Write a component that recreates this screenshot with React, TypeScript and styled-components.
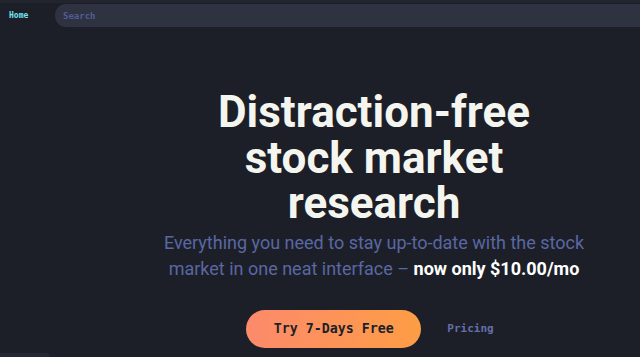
import React from "react";
import styled, { createGlobalStyle } from "styled-components";

const Global = createGlobalStyle`
  html, body { margin: 0; padding: 0; background: #1c1f27; }
  body { font-family: Roboto, "Noto Sans", sans-serif; overflow: hidden; }
  * { box-sizing: border-box; }
`;

const Page = styled.div`
  width: 640px;
  height: 357px;
  background: #1c1f27;
  display: flex;
  flex-direction: column;
  overflow: hidden;
`;

const Header = styled.header`
  display: flex;
  align-items: center;
  height: 31px;
  padding-top: 4px;
  padding-bottom: 4px;
  background: linear-gradient(#22252e 0, #22252e 3px, #1c1f27 3px);
`;

const NavLink = styled.a`
  width: 55px;
  padding-left: 9px;
  font-family: "DejaVu Sans Mono", monospace;
  font-weight: bold;
  font-size: 8px;
  color: #72e3f2;
  text-decoration: none;
`;

const Search = styled.div`
  flex: 1;
  height: 23px;
  display: flex;
  align-items: center;
  padding-left: 8px;
  background: #2f3241;
  border-radius: 11px 0 0 11px;
  font-family: "DejaVu Sans Mono", monospace;
  font-weight: bold;
  font-size: 9px;
  color: #4f5d95;
`;

const Body = styled.div`
  flex: 1;
  display: flex;
`;

const Side = styled.aside`
  width: 108px;
  display: flex;
  flex-direction: column;
  justify-content: flex-end;
`;

const Tab = styled.div`
  width: 50px;
  height: 4px;
  background: #252833;
  border-top-right-radius: 8px;
`;

const Hero = styled.main`
  flex: 1;
  display: flex;
  flex-direction: column;
  align-items: center;
  padding-top: 59px;
  text-align: center;
`;

const Title = styled.h1`
  margin: 0;
  font-family: Roboto, sans-serif;
  font-weight: 700;
  font-size: 44px;
  line-height: 45.5px;
  color: #f5f5f0;
  width: 350px;
`;

const Sub = styled.p`
  margin: 3px 0 0;
  max-width: 430px;
  font-family: Roboto, sans-serif;
  font-size: 18px;
  line-height: 26px;
  color: #5a67a3;
`;

const Strong = styled.strong`
  color: #ffffff;
  font-weight: 700;
`;

const Actions = styled.div`
  display: flex;
  align-items: center;
  gap: 26px;
  margin-top: 28px;
  margin-left: -8px;
`;

const Primary = styled.button`
  width: 175px;
  height: 38px;
  border: none;
  border-radius: 19px;
  background: linear-gradient(90deg, #fc8a6c, #fd9d45);
  font-family: "DejaVu Sans Mono", monospace;
  font-weight: bold;
  font-size: 13.3px;
  color: #1c1f27;
  cursor: pointer;
`;

const Secondary = styled.a`
  font-family: "DejaVu Sans Mono", monospace;
  font-weight: bold;
  font-size: 11px;
  color: #6470a8;
  text-decoration: none;
`;

export default function App() {
  return (
    <Page>
      <Global />
      <Header>
        <NavLink href="#">Home</NavLink>
        <Search>Search</Search>
      </Header>
      <Body>
        <Side>
          <Tab />
        </Side>
        <Hero>
          <Title>Distraction-free stock market research</Title>
          <Sub>
            Everything you need to stay up-to-date with the stock market in one
            neat interface – <Strong>now only $10.00/mo</Strong>
          </Sub>
          <Actions>
            <Primary>Try 7-Days Free</Primary>
            <Secondary href="#">Pricing</Secondary>
          </Actions>
        </Hero>
      </Body>
    </Page>
  );
}
